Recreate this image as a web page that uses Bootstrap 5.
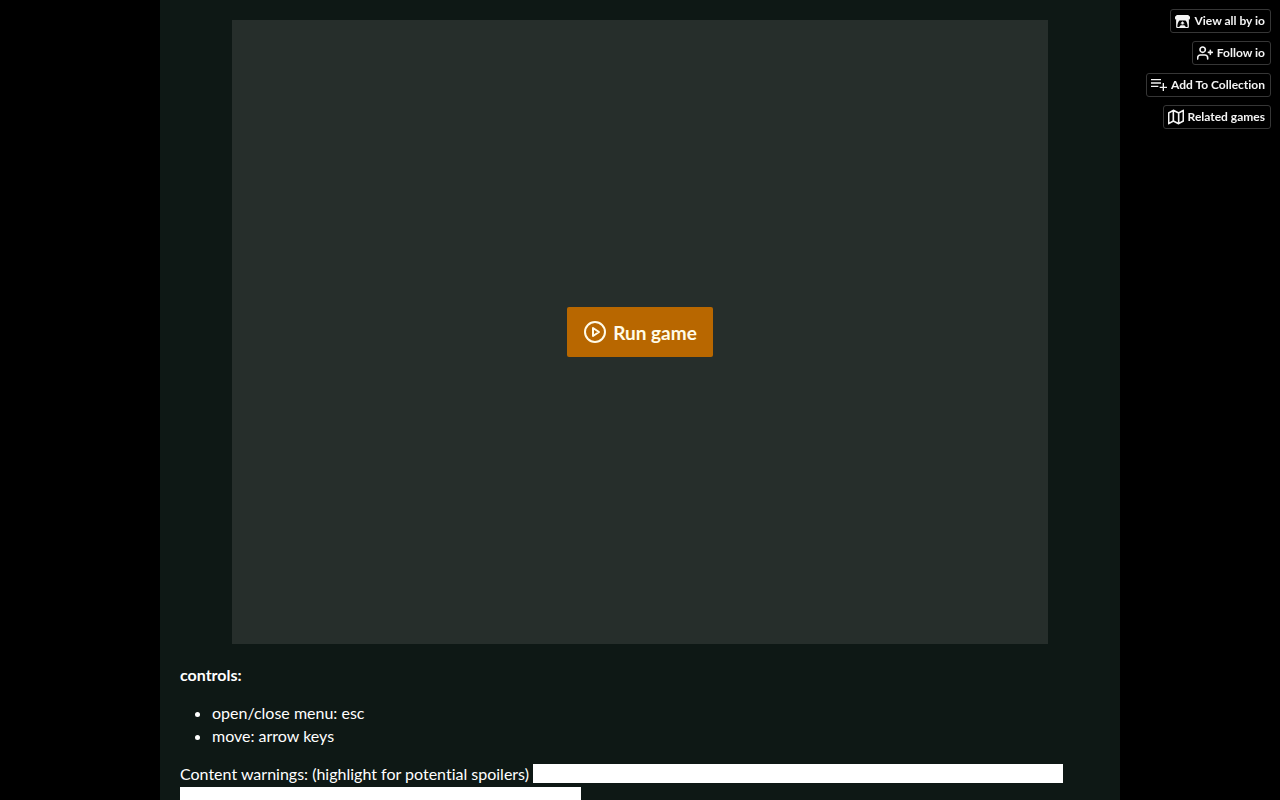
<!DOCTYPE html>
<html lang="en">
<head>
<meta charset="utf-8">
<meta name="viewport" content="width=device-width, initial-scale=1">
<title>Run game</title>
<link href="https://cdn.jsdelivr.net/npm/bootstrap@5.3.0/dist/css/bootstrap.min.css" rel="stylesheet">
<style>
body { background: #000; color: #fff; font-family: Lato, "Liberation Sans", sans-serif; font-size: 16px; line-height: 23px; font-variant-ligatures: none; }
.page-column { max-width: 960px; min-height: 100vh; background: #0e1815; padding: 20px; }
.page-column p, .controls-list { margin-bottom: 15px; }
.game-frame { max-width: 816px; aspect-ratio: 816 / 624; background: #262e2b; margin-bottom: 19px; }
.run-btn { --bs-btn-bg: #b86700; --bs-btn-color: #fffbe8; --bs-btn-hover-bg: #c87408; --bs-btn-hover-color: #fffbe8; --bs-btn-border-color: #b86700; --bs-btn-border-radius: 2px; --bs-btn-font-weight: 700; --bs-btn-font-size: 19px; height: 50px; padding: 0 16px; gap: 6px; border: 0; }
.run-btn span { padding-top: 2px; }
.controls-list { padding-left: 32px; }
.spoiler-bar { height: 19px; background: #fff; vertical-align: -3px; max-width: 100%; }
.spoiler-long { width: 530px; }
.spoiler-short { width: 401px; }
.user-tools { top: 9px; right: 9px; gap: 8px; }
.tool-link { height: 24px; padding: 0 5px 0 4px; gap: 4px; border: 1px solid #363636; border-radius: 3px; background: #000; color: #f4f4f4; font-size: 12px; font-weight: 700; line-height: 20px; text-decoration: none; }
.tool-link:hover { border-color: #888; }
.line-icon { fill: none; stroke: currentColor; stroke-width: 2; stroke-linecap: round; stroke-linejoin: round; }
.tool-link .line-icon { stroke-width: 2.400; }
</style>
</head>
<body>
<main class="page-column mx-auto">
  <section class="game-frame mx-auto d-flex align-items-center justify-content-center">
    <button type="button" class="btn run-btn d-flex align-items-center">
      <svg class="line-icon" width="24" height="24" viewBox="0 0 24 24" aria-hidden="true"><circle cx="12" cy="12" r="10"/><path d="M10 8l6 4-6 4z"/></svg>
      <span>Run game</span>
    </button>
  </section>
  <p><strong>controls:</strong></p>
  <ul class="controls-list">
    <li>open/close menu: esc</li>
    <li>move: arrow keys</li>
  </ul>
  <p>Content warnings: (highlight for potential spoilers) <span class="spoiler-bar spoiler-long d-inline-block"></span> <span class="spoiler-bar spoiler-short d-inline-block"></span></p>
</main>
<nav class="user-tools position-fixed d-flex flex-column align-items-end" aria-label="Creator links">
  <a href="#" class="tool-link d-flex align-items-center">
    <svg width="15" height="15" viewBox="0 0 16 16" fill="currentColor" aria-hidden="true"><path d="M2 1h12l2 2v1.500c0 1.200-1 1.800-2 1.800H2c-1 0-2-.6-2-1.800V3z"/><path fill-rule="evenodd" d="M1.200 6h13.600v7.500c0 .9-.6 1.500-1.500 1.500H2.700c-.9 0-1.500-.6-1.500-1.500zM4.800 7C3.500 8.200 2.500 11 2.500 13.200c.5 1 1.700.9 2.400 0L6 12h4l1.100 1.200c.7.9 1.900 1 2.400 0C13.500 11 12.500 8.200 11.200 7zM8 7.800l2.300 2.200H9v1.300H7V10H5.700z"/></svg>
    View all by io</a>
  <a href="#" class="tool-link d-flex align-items-center">
    <svg class="line-icon" width="16" height="16" viewBox="0 0 24 24" aria-hidden="true"><path d="M16 21v-2a4 4 0 0 0-4-4H5a4 4 0 0 0-4 4v2M20 8v6M23 11h-6"/><circle cx="8.500" cy="7" r="4"/></svg>
    Follow io</a>
  <a href="#" class="tool-link d-flex align-items-center">
    <svg width="16" height="16" viewBox="0 0 24 24" fill="currentColor" aria-hidden="true"><path d="M0 3h15v2H0zM0 8h15v2H0zM0 13h11v2H0zM17.500 9h2v5.500H24v2h-4.500V21h-2v-4.500H13v-2h4.500z"/></svg>
    Add To Collection</a>
  <a href="#" class="tool-link d-flex align-items-center">
    <svg class="line-icon" width="16" height="16" viewBox="0 0 24 24" aria-hidden="true"><path d="M1 6v16l7-4 8 4 7-4V2l-7 4-8-4zM8 2v16M16 6v16"/></svg>
    Related games</a>
</nav>
<script src="https://cdn.jsdelivr.net/npm/bootstrap@5.3.0/dist/js/bootstrap.bundle.min.js"></script>
</body>
</html>
